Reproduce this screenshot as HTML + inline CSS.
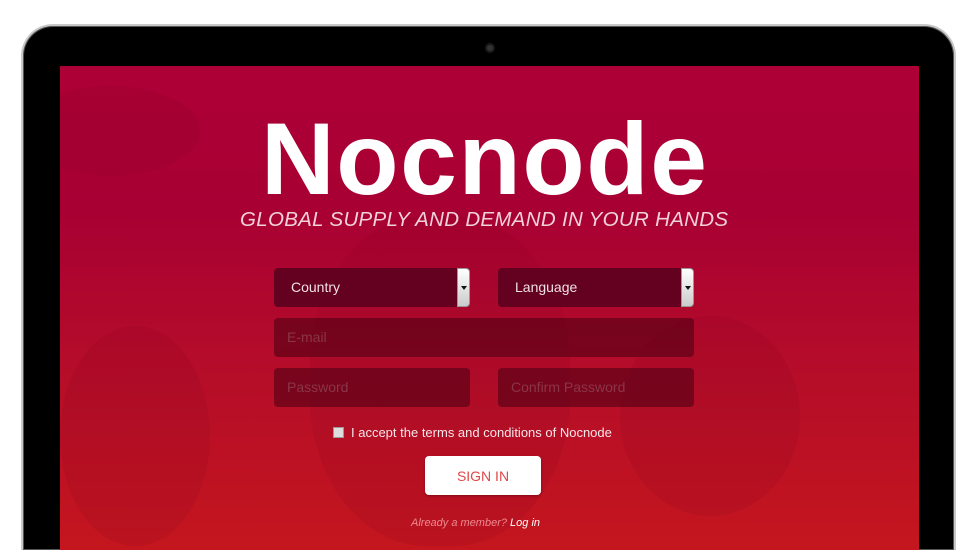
<!DOCTYPE html>
<html><head><style>
*{margin:0;padding:0;box-sizing:border-box}
html,body{width:976px;height:550px;overflow:hidden}
body{background:#fff;font-family:"Liberation Sans",sans-serif}
.wrap{position:relative;width:976px;height:550px;overflow:hidden}
.frame{position:absolute;left:21px;top:24px;width:935px;height:526px;border-radius:32px 32px 0 0;background:#000;border:2px solid #c8c8c8;border-bottom:none;box-shadow:inset 0 0 0 1px #555}
.cam{position:absolute;left:485px;top:43px;width:10px;height:10px;border-radius:50%;background:#333;border:2px solid #1a1a1a}
.screen{position:absolute;left:60px;top:66px;width:859px;height:484px;background:linear-gradient(180deg,#ad0037 0%,#a80033 30%,#b40c2a 60%,#c4161e 100%);overflow:hidden}
.blob{position:absolute;background:rgba(120,0,30,0.12);border-radius:50%}
.logo{position:absolute;left:201px;top:42px;font-weight:bold;font-size:102px;color:#fff;letter-spacing:1.6px;line-height:1;white-space:nowrap}
.tag{position:absolute;left:180px;top:142px;width:488px;text-align:center;font-style:italic;font-size:20.5px;color:#f2d2da;letter-spacing:0.3px;white-space:nowrap}
.f{position:absolute;height:39px;background:rgba(80,0,20,0.6);border-radius:4px;color:#8a3548;font-size:14px;padding-left:13px;line-height:39px}
.sel{background:#640020;color:#f0e0e4;padding-left:17px}
.arr{position:absolute;right:0;top:0;width:13px;height:39px;background:linear-gradient(#fff,#ccc);border-radius:0 4px 4px 0;border:1px solid #999}
.arr:after{content:"";position:absolute;left:3px;top:17px;border:3px solid transparent;border-top:4px solid #111}
.btn{position:absolute;left:365px;top:390px;width:116px;height:39px;background:#fff;border-radius:4px;color:#e04848;font-size:14px;text-align:center;line-height:40px;box-shadow:0 1px 2px rgba(0,0,0,.3)}
</style></head><body><div class="wrap">
<div class="frame"></div>
<div class="cam"></div>
<div class="screen">
<div class="blob" style="left:-40px;top:20px;width:180px;height:90px"></div>
<div class="blob" style="left:250px;top:150px;width:260px;height:330px;border-radius:45%"></div>
<div class="blob" style="left:560px;top:250px;width:180px;height:200px"></div>
<div class="blob" style="left:0px;top:260px;width:150px;height:220px"></div>
<div class="logo">Nocnode</div>
<div class="tag">GLOBAL SUPPLY AND DEMAND IN YOUR HANDS</div>
<div class="f sel" style="left:214px;top:202px;width:196px">Country<div class="arr"></div></div>
<div class="f sel" style="left:438px;top:202px;width:196px">Language<div class="arr"></div></div>
<div class="f" style="left:214px;top:252px;width:420px">E-mail</div>
<div class="f" style="left:214px;top:302px;width:196px">Password</div>
<div class="f" style="left:438px;top:302px;width:196px">Confirm Password</div>
<div style="position:absolute;left:273px;top:361px;width:11px;height:11px;background:#ddd;border:1px solid #999"></div>
<div style="position:absolute;left:291px;top:359px;font-size:13px;color:#f6e6ea">I accept the terms and conditions of Nocnode</div>
<div class="btn">SIGN IN</div>
<div style="position:absolute;left:351px;top:451px;font-size:11px;font-style:italic;color:#f08a90">Already a member? <span style="color:#fff">Log in</span></div>
</div>
</div></body></html>
